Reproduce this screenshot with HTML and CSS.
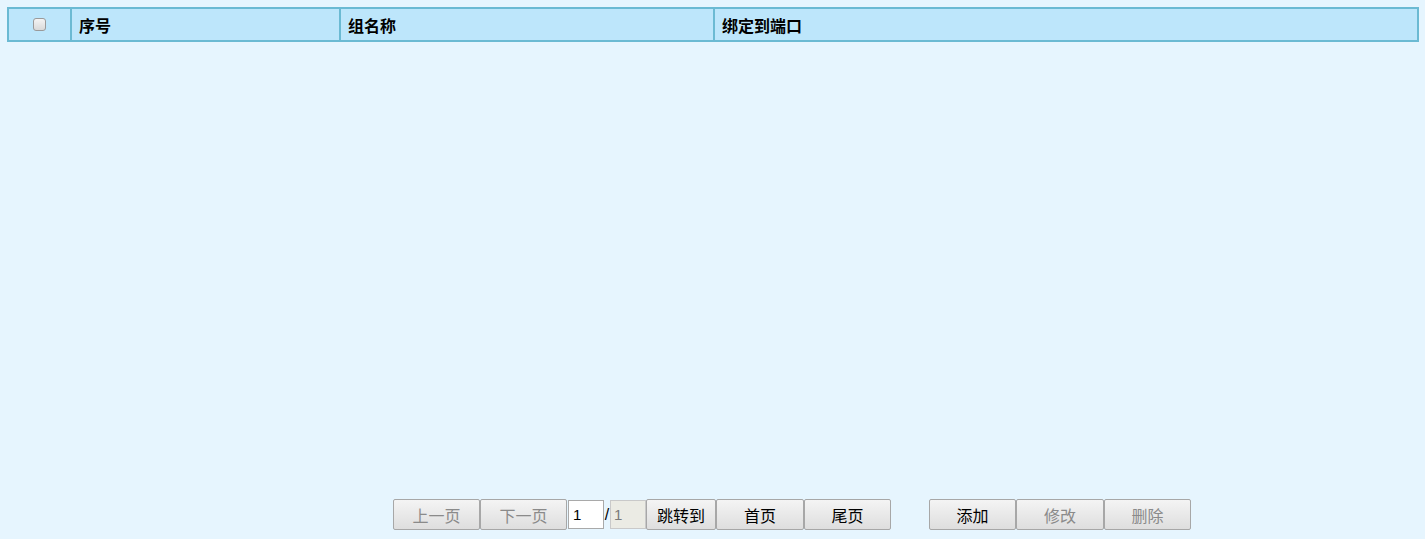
FILE: index.html
```html
<!DOCTYPE html>
<html lang="zh">
<head>
<meta charset="utf-8">
<link rel="stylesheet" href="styles.css">
</head>
<body>
<div class="page">
  <table class="grid">
    <thead>
      <tr>
        <th class="c-check"><span class="chk"></span></th>
        <th class="c-no">序号</th>
        <th class="c-name">组名称</th>
        <th class="c-port">绑定到端口</th>
      </tr>
    </thead>
  </table>
  <div class="spacer"></div>
  <div class="pager">
    <div class="group">
      <button class="btn disabled">上一页</button>
      <button class="btn disabled">下一页</button>
      <input class="pg-in" value="1">
      <span class="slash">/</span>
      <span class="pg-total">1</span>
      <button class="btn jump">跳转到</button>
      <button class="btn wide">首页</button>
      <button class="btn">尾页</button>
    </div>
    <div class="group">
      <button class="btn">添加</button>
      <button class="btn wide disabled">修改</button>
      <button class="btn disabled">删除</button>
    </div>
  </div>
</div>
</body>
</html>
```
FILE: styles.css
```css
html, body {
  margin: 0;
  padding: 0;
  height: 100%;
  background: #e6f5fe;
  font-family: "Noto Sans CJK SC", "Microsoft YaHei", sans-serif;
}
.page {
  height: 100vh;
  display: flex;
  flex-direction: column;
  padding: 7px 6px 0 7px;
  box-sizing: border-box;
}
.grid {
  width: 100%;
  border-collapse: collapse;
  border: 2px solid #6bbad3;
  background: #bde6fb;
  table-layout: fixed;
}
.grid th {
  height: 33px;
  padding: 1px 0 0 7px;
  text-align: left;
  font-size: 16px;
  font-weight: bold;
  color: #000;
  border-left: 2px solid #6bbad3;
  box-sizing: border-box;
  vertical-align: middle;
  line-height: 18px;
}
.grid th.c-check {
  width: 63px;
  text-align: center;
  padding: 0;
  border-left: none;
}
.c-no { width: 269px; }
.c-name { width: 374px; }
.chk {
  display: inline-block;
  width: 11px;
  height: 11px;
  border: 1px solid #9a9a9a;
  border-radius: 3px;
  background: linear-gradient(#f4f4f4, #d9d9d9);
  vertical-align: middle;
  margin-top: -5px;
}
.spacer { flex: 1; }
.pager {
  display: flex;
  padding-left: 386px;
  padding-bottom: 9px;
  gap: 38px;
}
.group {
  display: flex;
  align-items: center;
}
.btn {
  width: 87px;
  height: 31px;
  margin: 0;
  padding: 0;
  border: 1px solid #a7a7a7;
  border-radius: 2px;
  background: linear-gradient(#f4f4f4, #dedede);
  font-family: "Noto Sans CJK SC", sans-serif;
  font-size: 16px;
  color: #000;
  box-sizing: border-box;
}
.btn.wide { width: 88px; }
.btn.disabled { color: #8a8a8a; }
.btn.jump { width: 70px; }
.pg-in {
  width: 36px;
  height: 29px;
  box-sizing: border-box;
  border: 1px solid #a9a9a9;
  background: #fff;
  font-family: "Liberation Sans", sans-serif;
  font-size: 15px;
  padding: 0 4px;
  margin: 0 0 0 1px;
}
.slash {
  font-family: "Liberation Sans", sans-serif;
  font-size: 16px;
  width: 6px;
  text-align: center;
  color: #000;
}
.pg-total {
  display: inline-block;
  width: 36px;
  height: 29px;
  line-height: 27px;
  box-sizing: border-box;
  border: 1px solid #c9c9c9;
  background: #ebebe4;
  color: #7a7a7a;
  font-family: "Liberation Sans", sans-serif;
  font-size: 15px;
  padding: 0 3px;
}
```
